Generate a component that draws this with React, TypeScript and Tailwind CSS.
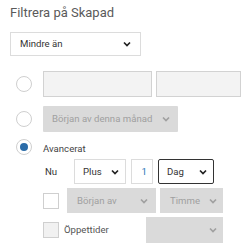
import React from "react";

const Chev = ({ dis }: { dis?: boolean }) => (
  <svg width="8" height="6" viewBox="0 0 8 6">
    <path d="M1 1.5l3 3 3-3" fill="none" stroke={dis ? "#a0a0a0" : "#222"} strokeWidth="1.7" />
  </svg>
);

const Radio = ({ checked }: { checked?: boolean }) => (
  <div className="w-[16px] h-[16px] rounded-full border border-[#cfcfcf] bg-white flex items-center justify-center shrink-0">
    {checked && <div className="w-[8px] h-[8px] rounded-full bg-[#2b6ca8]" />}
  </div>
);

export default function App() {
  return (
    <div
      className="w-[244px] h-[245px] bg-white pl-[10px] text-[#555] overflow-hidden"
      style={{ fontFamily: "Roboto, 'Noto Sans', sans-serif" }}
    >
      <div className="pt-[5px] text-[13px] leading-[15px] text-[#5a5a5a]">Filtrera på Skapad</div>

      <div className="mt-[12px] w-[131px] h-[24px] border border-[#dcdcdc] bg-white flex items-center justify-between pl-[9px] pr-[9px] text-[9.6px] text-[#333]">
        <span>Mindre än</span>
        <Chev />
      </div>

      <div className="mt-[15px] flex items-center">
        <div className="ml-[6px] mr-[11px]"><Radio /></div>
        <div className="w-[109px] h-[26px] border border-[#d2d2d2] bg-[#f3f3f3]" />
        <div className="ml-[4px] w-[85px] h-[26px] border border-[#d2d2d2] bg-[#f3f3f3]" />
      </div>

      <div className="mt-[9px] flex items-center">
        <div className="ml-[6px] mr-[11px]"><Radio /></div>
        <div className="w-[135px] h-[26px] bg-[#dadada] flex items-center justify-between pl-[9px] pr-[8px] text-[9.6px] text-[#a0a0a0] rounded-[1px]">
          <span>Början av denna månad</span>
          <Chev dis />
        </div>
      </div>

      <div className="mt-[6px] flex items-center">
        <div className="ml-[6px] mr-[11px]"><Radio checked /></div>
        <span className="text-[9.6px] text-[#444] mt-[4px]">Avancerat</span>
      </div>

      <div className="mt-[3px] ml-[35px] flex items-center">
        <span className="text-[9.6px] text-[#333] w-[29px]">Nu</span>
        <div className="w-[52px] h-[25px] border border-[#dcdcdc] bg-white flex items-center justify-between pl-[8px] pr-[6px] text-[9.6px] text-[#333]">
          <span>Plus</span>
          <Chev />
        </div>
        <div className="ml-[5px] w-[22px] h-[25px] border border-[#dcdcdc] bg-white flex items-center justify-end pr-[5px] text-[9.6px] text-[#2a78b8]">
          1
        </div>
        <div className="ml-[5px] w-[56px] h-[25px] border border-[#333] rounded-[2px] bg-white flex items-center justify-between pl-[8px] pr-[6px] text-[9.6px] text-[#333]">
          <span>Dag</span>
          <Chev />
        </div>
      </div>

      <div className="mt-[4px] ml-[33px] flex items-center">
        <div className="w-[16px] h-[16px] border border-[#cfcfcf] bg-white" />
        <div className="ml-[8px] w-[89px] h-[25px] bg-[#dadada] flex items-center justify-between pl-[10px] pr-[8px] text-[9.6px] text-[#a0a0a0]">
          <span>Början av</span>
          <Chev dis />
        </div>
        <div className="ml-[4px] w-[63px] h-[25px] bg-[#dadada] flex items-center justify-between pl-[10px] pr-[6px] text-[9.6px] text-[#a0a0a0]">
          <span>Timme</span>
          <Chev dis />
        </div>
      </div>

      <div className="mt-[4px] ml-[33px] flex items-center">
        <div className="w-[16px] h-[16px] border border-[#cfcfcf] bg-[#f1f1f1]" />
        <span className="ml-[5px] w-[82px] text-[9.6px] text-[#555]">Öppettider</span>
        <div className="w-[77px] h-[26px] bg-[#dadada] flex items-center justify-end pr-[6px]">
          <Chev dis />
        </div>
      </div>
    </div>
  );
}
